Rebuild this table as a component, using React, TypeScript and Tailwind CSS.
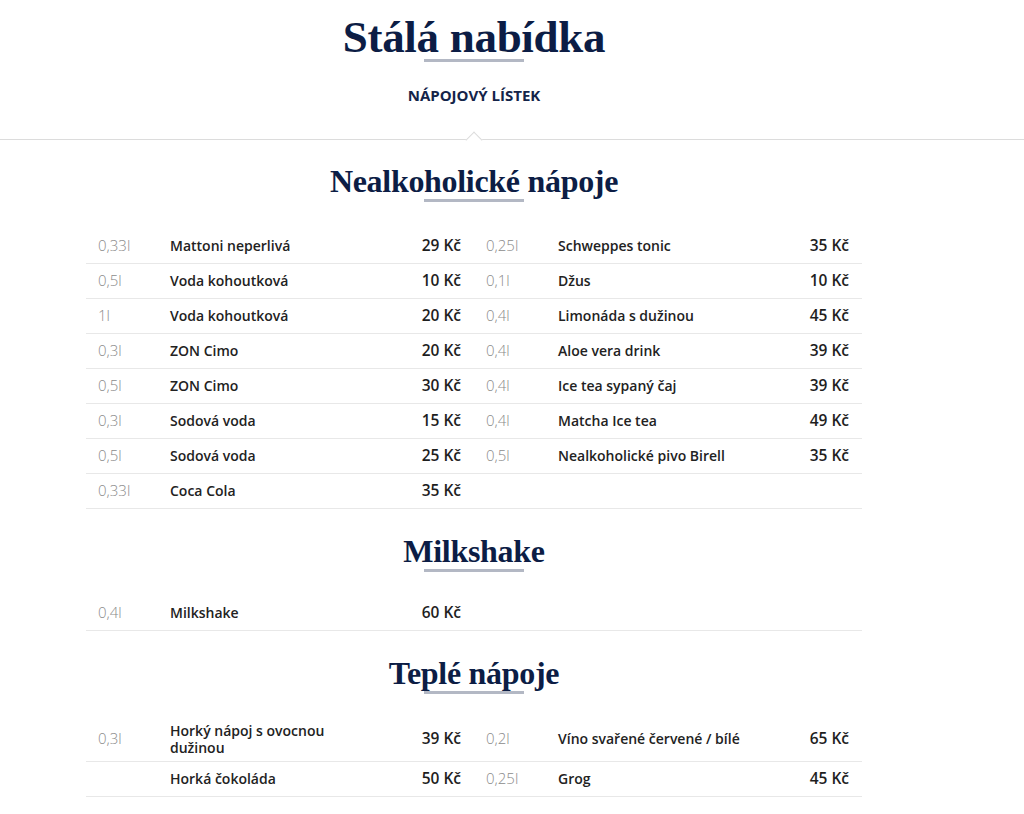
import React from "react";

type Item = { vol: string; name: string; price: string };

const nealko: [Item, Item | null][] = [
  [{ vol: "0,33l", name: "Mattoni neperlivá", price: "29 Kč" }, { vol: "0,25l", name: "Schweppes tonic", price: "35 Kč" }],
  [{ vol: "0,5l", name: "Voda kohoutková", price: "10 Kč" }, { vol: "0,1l", name: "Džus", price: "10 Kč" }],
  [{ vol: "1l", name: "Voda kohoutková", price: "20 Kč" }, { vol: "0,4l", name: "Limonáda s dužinou", price: "45 Kč" }],
  [{ vol: "0,3l", name: "ZON Cimo", price: "20 Kč" }, { vol: "0,4l", name: "Aloe vera drink", price: "39 Kč" }],
  [{ vol: "0,5l", name: "ZON Cimo", price: "30 Kč" }, { vol: "0,4l", name: "Ice tea sypaný čaj", price: "39 Kč" }],
  [{ vol: "0,3l", name: "Sodová voda", price: "15 Kč" }, { vol: "0,4l", name: "Matcha Ice tea", price: "49 Kč" }],
  [{ vol: "0,5l", name: "Sodová voda", price: "25 Kč" }, { vol: "0,5l", name: "Nealkoholické pivo Birell", price: "35 Kč" }],
  [{ vol: "0,33l", name: "Coca Cola", price: "35 Kč" }, null],
];

const milk: [Item, Item | null][] = [[{ vol: "0,4l", name: "Milkshake", price: "60 Kč" }, null]];

const teple: [Item, Item | null][] = [
  [{ vol: "0,3l", name: "Horký nápoj s ovocnou dužinou", price: "39 Kč" }, { vol: "0,2l", name: "Víno svařené červené / bílé", price: "65 Kč" }],
  [{ vol: "", name: "Horká čokoláda", price: "50 Kč" }, { vol: "0,25l", name: "Grog", price: "45 Kč" }],
];

function Cell({ item }: { item: Item | null }) {
  if (!item) return <div className="w-[388px]" />;
  return (
    <div className="w-[388px] flex items-center pl-3 pr-[13px]">
      <div className="w-[72px] text-[15px] font-light text-[#8c8c8c]">{item.vol}</div>
      <div className="w-[190px] text-[14px] font-semibold text-[#222] leading-[17px]">{item.name}</div>
      <div className="flex-1 text-right text-[15.5px] font-semibold text-[#1e1e1e]">{item.price}</div>
    </div>
  );
}

function Heading({ children, className }: { children: React.ReactNode; className?: string }) {
  return (
    <div className={`flex flex-col items-center ${className ?? ""}`}>
      <h2 className="text-[32px] leading-[38px] font-bold text-[#0c1d45] font-['Liberation_Serif',serif] tracking-[-0.3px]">{children}</h2>
      <div className="w-[100px] h-[3px] bg-[#b3b8c4] -mt-[1px]" />
    </div>
  );
}

function Table({ rows }: { rows: [Item, Item | null][] }) {
  return (
    <div className="flex flex-col">
      {rows.map((r, i) => (
        <div key={i} className="flex min-h-[35px] py-[5px] border-b border-[#e8e8e8] items-center">
          <Cell item={r[0]} />
          <Cell item={r[1]} />
        </div>
      ))}
    </div>
  );
}

export default function App() {
  return (
    <div className="w-[1024px] min-h-[814px] bg-white font-['Open_Sans',sans-serif]">
      <div className="w-[948px] flex flex-col items-center pt-[12px]">
        <h1 className="text-[45px] leading-[50px] font-bold text-[#0c1d45] font-['Liberation_Serif',serif] tracking-[-0.3px]">Stálá nabídka</h1>
        <div className="w-[100px] h-[3px] bg-[#b3b8c4] -mt-[3px]" />
        <div className="mt-[22px] text-[15px] font-bold text-[#142449]">NÁPOJOVÝ LÍSTEK</div>
      </div>
      <div className="relative mt-[32px] border-t border-[#dcdcdc]">
        <div className="absolute left-[468px] -top-[6px] w-[12px] h-[12px] rotate-45 bg-white border-l border-t border-[#dcdcdc]" />
      </div>
      <div className="w-[776px] ml-[86px] flex flex-col">
        <Heading className="mt-[22px] mb-[27px]">Nealkoholické nápoje</Heading>
        <Table rows={nealko} />
        <Heading className="mt-[23px] mb-[24px]">Milkshake</Heading>
        <Table rows={milk} />
        <Heading className="mt-[23px] mb-[23px]">Teplé nápoje</Heading>
        <Table rows={teple} />
      </div>
    </div>
  );
}
